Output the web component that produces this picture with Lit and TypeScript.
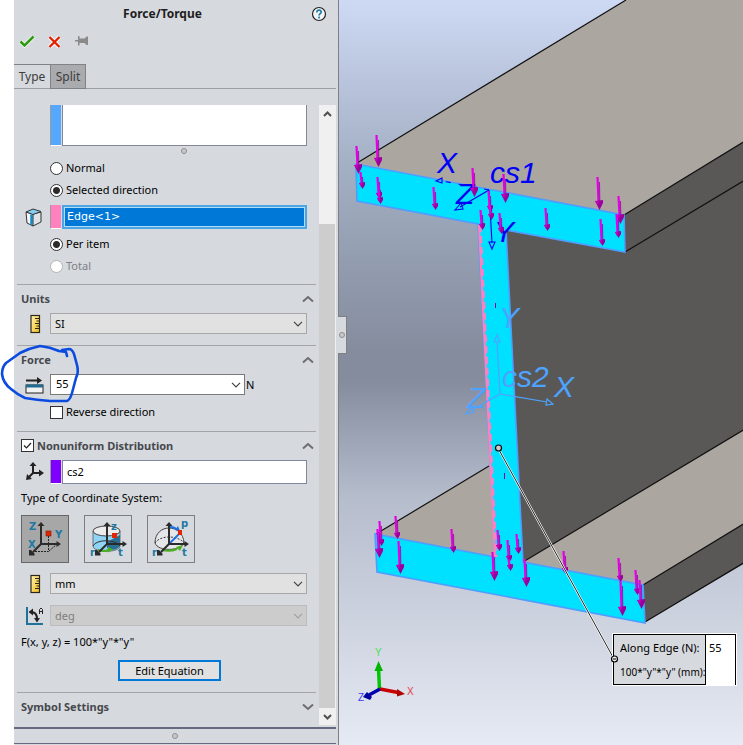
import { LitElement, html, svg, css } from "lit";
import { customElement, state } from "lit/decorators.js";

type Arrow = [x: number, top: number, tip: number];

const LOADS: Arrow[] = [
  [358, 147, 175], [378, 136, 168], [362, 173, 190], [379, 178, 200], [380, 186, 205],
  [435, 188, 211], [474, 169, 198], [505, 175, 204], [490, 192, 213], [491, 205, 221],
  [482, 211, 231], [501, 214, 235], [547, 209, 232], [599, 178, 211], [602, 220, 247],
  [620, 197, 225], [618, 215, 239],
  [381, 522, 547], [379, 530, 559], [397, 517, 540], [400, 542, 575], [453, 530, 554],
  [494, 553, 582], [499, 531, 552], [509, 541, 563], [510, 560, 572], [518, 535, 555],
  [526, 560, 588], [565, 552, 575], [620, 559, 583], [622, 582, 617], [637, 571, 596],
  [641, 581, 610],
];

const load = ([x, top, tip]: Arrow) => {
  const h = tip - top > 27 ? 9 : 6;
  const w = tip - top > 27 ? 4 : 3;
  return svg`
    <path d="M${x - 1.5} ${top}L${x - 0.5} ${tip - h}" stroke="#e400e4" stroke-width="2.2"/>
    <path d="M${x + 0.5} ${top + 5}L${x + 0.8} ${tip - h}" stroke="#8c0090" stroke-width=".8"/>
    <path d="M${x - w} ${tip - h}L${x + w} ${tip - h - 1}L${x + w} ${tip - h + 2}L${x + 0.5} ${tip}Z" fill="#9c009c"/>
    <path d="M${x - w} ${tip - h}h${w}l-1 4z" fill="#c400c4"/>`;
};

const chevron = (up: boolean) => html`<svg class="chev" viewBox="0 0 12 8" aria-hidden="true">
  <path d=${up ? "M1 6.5L6 2L11 6.5" : "M1 1.5L6 6L11 1.5"} fill="none" stroke="#6b6e73" stroke-width="2"/></svg>`;

const caret = html`<svg class="caret" viewBox="0 0 10 6" aria-hidden="true">
  <path d="M1 .8L5 4.8L9 .8" fill="none" stroke="currentColor" stroke-width="1.2"/></svg>`;

const ruler = html`<svg class="icon" viewBox="0 0 20 20" aria-hidden="true">
  <defs><linearGradient id="rg" x2="1" y2="1"><stop offset="0" stop-color="#fff3b0"/><stop offset="1" stop-color="#f2bc1c"/></linearGradient></defs>
  <rect x="6" y="1.5" width="8.500" height="17" fill="url(#rg)" stroke="#2c2718" stroke-width="1.200"/>
  <path d="M10 4.500h4M11.500 7h3M10 9.500h4M11.500 12h3M10 14.500h4" stroke="#2c2718"/></svg>`;

const axesIcon = svg`<path d="M0 0V-19M0 0H17M0 0L-8 8" stroke="#2b2b2b" stroke-width="2" fill="none"/>
  <path d="M0 -22l-3.500 4h7zM20 0l-4.500 -3v6zM-12 11.500v-5.500l2 0 3.500 3.500v2z" fill="#2b2b2b"/>`;

@customElement("app-root")
export class AppRoot extends LitElement {
  @state() private direction = "selected";
  @state() private system = 0;

  static styles = css`
    :host {
      display: grid;
      grid-template-columns: minmax(339px, 36%) 1fr;
      min-height: 100vh;
      position: relative;
      background: #fff;
      color: #000;
      font: 11px/16px "Noto Sans", "Open Sans", sans-serif;
    }
    * { box-sizing: border-box; }
    button, input, select { font: inherit; color: inherit; margin: 0; padding: 0; border-radius: 0; }
    button { background: none; border: 0; display: flex; align-items: center; justify-content: center; }
    h1, h2, p { margin: 0; font-size: inherit; }
    svg { display: block; }
    .panel {
      margin-left: 14px;
      background: #d6d9de;
      border-right: 1px solid #808080;
      padding-right: 2px;
      display: flex;
      flex-direction: column;
      position: relative;
    }
    .title { display: flex; align-items: center; height: 28px; padding: 0 9px 0 0; }
    .title h1 { flex: 1; text-align: center; font-weight: 700; font-size: 12px; color: #1e1e1e; }
    .help { width: 16px; height: 16px; }
    .actions { display: flex; align-items: center; gap: 12px; height: 27px; padding-left: 5px; }
    .actions svg { width: 16px; height: 16px; }
    .tabs { display: flex; height: 25px; margin: 9px 0 16px; border-bottom: 1px solid #9c9ea1; }
    .tab { width: 36px; height: 24px; border-top: 1px solid #808284; font-size: 12px; color: #3c3c3c; }
    .tab.off { height: 25px; border: 1px solid #808284; background: #a9abae; }
    .body { flex: 1; display: flex; }
    .content { flex: 1; min-width: 0; padding: 0 3px; }
    .rail { flex: 0 0 17px; background: #f0f0f0; display: flex; flex-direction: column; }
    .rail button { height: 17px; width: 17px; }
    .rail svg { width: 9px; height: 6px; }
    .track { flex: 1; padding-top: 102px; display: flex; }
    .thumb { flex: 1; background: #cdcdcd; margin-right: 1px; }
    .section { border-top: 1px solid #a3a5a8; padding: 0 9px 11px 0; }
    .section.first { border: 0; padding-bottom: 7px; }
    .section.tall { padding-bottom: 8px; }
    .section.last { padding-bottom: 3px; }
    .head { display: flex; align-items: center; gap: 3px; height: 27px; padding-left: 4px; margin-right: -7px; }
    .head h2 { flex: 1; font-weight: 700; color: #46484d; }
    .head + .row { margin-top: 1px; }
    .chev { width: 12px; height: 8px; }
    .row { display: flex; align-items: center; padding-left: 33px; position: relative; }
    .row + .row { margin-top: 11px; }
    .lead { padding-left: 0; }
    .lead > .icon { flex: 0 0 20px; margin: 0 5px 0 8px; width: 20px; height: 20px; }
    .strip { flex: 0 0 11px; height: 24px; border-left: 1px solid #9a9a9a; border-bottom: 1px solid #fff; margin-right: 1px; }
    .blue { background: #56a8ff; }
    .pink { background: #ff82be; }
    .violet { background: #8000ff; }
    .list { flex: 1; height: 24px; background: #fff; border: 1px solid #82879b; }
    .first .top { height: 41px; border-top: 0; }
    .grip { display: flex; justify-content: center; height: 11px; padding: 2px 0 0 43px; }
    .dot { width: 6px; height: 6px; border-radius: 50%; border: 1px solid #8e8e90; background: #c9c9cb; }
    .focus { border: 2px solid #4ba6e4; padding: 1px; background: #b4dcf6; }
    .option { background: #0078d7; color: #fff; height: 18px; padding-left: 2px; font: 11px/18px "DejaVu Sans", sans-serif; }
    .textfield { padding: 0 4px 2px; }
    .choice { display: flex; align-items: center; gap: 3px; height: 22px; margin-left: 33px; }
    .choice.disabled { color: #7e8084; }
    .edge { margin: 4px 0; }
    .reverse { margin-top: 6px; }
    input[type="radio"], input[type="checkbox"] {
      appearance: none; width: 13px; height: 13px; flex: none; background: #fff; border: 1px solid #333;
    }
    input[type="radio"] { border-radius: 50%; }
    input[type="radio"]:checked { background: radial-gradient(circle, #2b2b2b 0 3px, #fff 4px); }
    input[type="radio"]:disabled { border-color: #b4b4b4; }
    .tick { position: relative; display: flex; }
    .tick svg { position: absolute; inset: 0; width: 13px; height: 13px; pointer-events: none; display: none; }
    .tick input:checked + svg { display: block; }
    .pick { flex: 1; position: relative; display: flex; min-width: 0; color: #444; }
    .pick select {
      appearance: none; flex: 1; min-width: 0; height: 21px; padding-left: 4px;
      border: 1px solid #a8a8a8; background: #e1e1e1; color: #000;
    }
    .pick select:disabled { background: #ccc; border-color: #bcbcbc; color: #7e7e7e; opacity: 1; }
    .pick .caret { position: absolute; right: 4px; top: 8px; width: 10px; height: 6px; pointer-events: none; }
    .pick.dim { color: #a0a0a0; }
    .combo { flex: 1; height: 21px; display: flex; background: #fff; border: 1px solid #7a7a7a; margin-right: 1px; }
    .combo input { flex: 1; min-width: 0; border: 0; background: none; padding: 0 5px 2px; outline: 0; }
    .combo button { width: 16px; color: #444; }
    .combo .caret { width: 10px; height: 6px; }
    .unit { flex: 0 0 61px; }
    .caption { height: 28px; line-height: 28px; padding-left: 4px; }
    .systems { display: flex; gap: 15px; padding-left: 4px; margin: 3px 0 10px; }
    .system { width: 48px; height: 48px; border: 1px solid #7c7e82; }
    .system.on { background: #a7a7a7; border-color: #666; }
    .system svg { width: 46px; height: 46px; }
    .formula { height: 22px; line-height: 22px; margin: 5px 0 7px; padding-left: 4px; }
    .center { display: flex; justify-content: center; padding-left: 15px; }
    .edit { width: 103px; height: 21px; border: 2px solid #0078d7; background: #e1e1e1; }
    .foot { height: 17px; border-top: 2px solid #666a80; border-bottom: 1px solid #666a80; margin: 2px 0 1px; display: flex; align-items: center; justify-content: center; }
    .handle {
      position: absolute; left: 100%; top: 316px; width: 9px; height: 38px; background: #d6d9de;
      border: 1px solid #808080; border-left: 0; display: flex; align-items: center; justify-content: center; z-index: 1;
    }
    .view { position: relative; overflow: hidden; background: linear-gradient(#ced9f4 0%, #a2aec2 23%, #858c9e 47%, #858c9e 51%, #b6bdcd 67%, #cdd2df 83%, #e6eaf4 100%); }
    .scene { position: absolute; inset: 0; width: 100%; height: 100%; }
    .over { pointer-events: none; }
    .axis { font: italic 30px "Liberation Sans", sans-serif; }
    .glyph { font: bold 10px "DejaVu Sans", sans-serif; fill: #1e78a2; }
    .tag { font: 10px "Liberation Sans", sans-serif; }
    .callout {
      position: absolute; left: 274px; top: 634px; width: 123px; height: 51px; display: grid; grid-template-columns: minmax(0, 1fr) 29px;
      border: 1px solid #000; outline: 1px solid #fff; background: #d6d9de;
    }
    .callout .names { display: flex; flex-direction: column; padding-left: 6px; border-right: 1px solid #000; white-space: nowrap; }
    .callout label, .callout span { height: 25px; line-height: 25px; }
    .callout span { font-size: 10px; }
    .callout .value { background: #fff; }
    .callout input { width: 100%; height: 25px; border: 0; padding: 0 3px; background: none; }
    .ink { position: absolute; left: 0; top: 340px; width: 84px; height: 66px; pointer-events: none; z-index: 2; }
  `;

  private systems = [
    svg`<path d="M27.500 21V36.500H12M28 36L35 30" fill="none" stroke="#222" stroke-dasharray="2 1"/>
      <g transform="translate(20 29)">${axesIcon}</g>
      <rect x="25" y="16" width="5" height="5" fill="#e22400" stroke="#7c1a06" stroke-width=".6"/>
      <text class="glyph" x="8" y="15">Z</text><text class="glyph" x="34" y="23">Y</text><text class="glyph" x="7" y="33">X</text>`,
    svg`<path d="M9 16V31C9 38 36 38 36 31V16" fill="#8fd4f5" stroke="#555" stroke-width=".8"/>
      <path d="M23 27L36 20V31C33 35 28 36 23 33Z" fill="#2a6e93"/>
      <path d="M9 31C12 24 32 24 36 31" fill="none" stroke="#333"/>
      <ellipse cx="22.500" cy="16" rx="13.500" ry="5" fill="#ececec" stroke="#444"/>
      <path d="M14 35Q19 37 25 35" fill="none" stroke="#4caf20" stroke-width="2"/><path d="M29 34.500l-5-3v6z" fill="#4caf20"/>
      <g transform="translate(23 29)">${axesIcon}</g>
      <rect x="28" y="18" width="5" height="5" fill="#e22400"/>
      <text class="glyph" x="27" y="15">z</text><text class="glyph" x="6" y="41">r</text><text class="glyph" x="34" y="41">t</text>`,
    svg`<path d="M8 28C8 8 36 8 37 28C34 36 11 37 8 28Z" fill="#e4e6e9" stroke="#444"/>
      <path d="M8 28C13 20 31 20 37 28" fill="none" stroke="#333" stroke-dasharray="2 1.500"/>
      <path d="M15 35Q23 37 30 34" fill="none" stroke="#4caf20" stroke-width="2"/><path d="M36 30l-3 6-4-4z" fill="#4caf20"/>
      <path d="M23 28L33 18M23 12Q28 12 30 15" fill="none" stroke="#1f6fe0" stroke-width="1.800"/><path d="M33 16l-5-1 3-4z" fill="#1f6fe0"/>
      <g transform="translate(22 29)">${axesIcon}</g>
      <rect x="31" y="15" width="4" height="5" fill="#e22400"/>
      <text class="glyph" x="34" y="12">p</text><text class="glyph" x="5" y="41">r</text><text class="glyph" x="35" y="41">t</text>`,
  ];

  private head(title: string, up = true) {
    return html`<header class="head"><h2>${title}</h2><button aria-label="Toggle ${title}">${chevron(up)}</button></header>`;
  }

  private radio(group: string, value: string, label: string, checked: boolean, disabled = false) {
    return html`<label class="choice ${disabled ? "disabled" : ""}">
      <input type="radio" name=${group} .checked=${checked} ?disabled=${disabled}
        @change=${() => group === "direction" && (this.direction = value)}>${label}</label>`;
  }

  private pick(name: string, value: string, disabled = false) {
    return html`<div class="pick ${disabled ? "dim" : ""}">
      <select aria-label=${name} ?disabled=${disabled}><option>${value}</option></select>${caret}</div>`;
  }

  private panel() {
    return html`<aside class="panel">
      <div class="title"><h1>Force/Torque</h1>
        <button aria-label="Help"><svg class="help" viewBox="0 0 16 16">
          <circle cx="8" cy="8" r="6.500" fill="#f2f3f5" stroke="#222" stroke-width="1.200"/>
          <path d="M5.800 6.400C5.800 3.200 10.400 3.500 10.200 6.200C10 7.700 8.100 7.700 8.100 9.500" fill="none" stroke="#1d7ba8" stroke-width="1.700"/>
          <rect x="7.200" y="10.600" width="1.800" height="1.800" fill="#1d7ba8"/></svg></button>
      </div>
      <div class="actions">
        <button aria-label="OK"><svg viewBox="0 0 16 16"><path d="M1.500 7.500L5.500 11.500L14.500 2.500" fill="none" stroke="#fff" stroke-width="4"/><path d="M1.500 7.500L5.500 11.500L14.500 2.500" fill="none" stroke="#2f9a12" stroke-width="2.600"/></svg></button>
        <button aria-label="Cancel"><svg viewBox="0 0 16 16"><path d="M2.500 3L12.500 13M12.500 3L2.500 13" stroke="#fff" stroke-width="4"/><path d="M2.500 3L12.500 13M12.500 3L2.500 13" stroke="#e02200" stroke-width="2.400"/></svg></button>
        <button aria-label="Keep visible"><svg viewBox="2 1 16 16"><path d="M0 7H6V8.500H0ZM5 3H6.500V5.500H11.500L13.500 3.500H15V12H13.500L11.500 10H6.500V12.500H5Z" fill="#8a8a8a"/></svg></button>
      </div>
      <div class="tabs" role="tablist">
        <button class="tab" role="tab" aria-selected="true">Type</button>
        <button class="tab off" role="tab" aria-selected="false">Split</button>
      </div>
      <div class="body">
        <div class="content">
          <div class="section first">
            <div class="row"><span class="strip blue top"></span><div class="list top" role="listbox" aria-label="Faces"></div></div>
            <div class="grip"><span class="dot"></span></div>
            ${this.radio("direction", "normal", "Normal", this.direction === "normal")}
            ${this.radio("direction", "selected", "Selected direction", this.direction === "selected")}
            <div class="row lead edge">
              <svg class="icon" viewBox="1 0 20 20" aria-hidden="true">
                <path d="M2 5L9 7V19L3 16Z" fill="#f4f5f6" stroke="#333"/><path d="M9 7L17 5V15L9 19Z" fill="#dfe2e6" stroke="#333"/>
                <path d="M2 5L9 2L17 4.500L9 7.500Z" fill="#86cdf0" stroke="#333"/><path d="M7.500 7.500V18" stroke="#1489c8" stroke-width="2.500"/></svg>
              <span class="strip pink"></span>
              <div class="list focus" role="listbox" aria-label="Direction"><div class="option" role="option" aria-selected="true">Edge&lt;1&gt;</div></div>
            </div>
            ${this.radio("scope", "item", "Per item", true)}
            ${this.radio("scope", "total", "Total", false, true)}
          </div>
          <div class="section">
            ${this.head("Units")}
            <div class="row lead">${ruler}${this.pick("Units", "SI")}</div>
          </div>
          <div class="section tall">
            ${this.head("Force")}
            <div class="row lead">
              <svg class="icon" viewBox="1 0 20 20" aria-hidden="true"><path d="M2 5.500H14" stroke="#222" stroke-width="2"/><path d="M13 2L18 5.500L13 9Z" fill="#222"/>
                <rect x="2" y="10" width="17" height="8" fill="#f2f2f2" stroke="#222"/><path d="M2 11H19" stroke="#1f6b92" stroke-width="3"/></svg>
              <div class="combo"><input aria-label="Force value" value="55"><button aria-label="Values">${caret}</button></div>
              <span class="unit">N</span>
            </div>
            <label class="choice reverse"><input type="checkbox">Reverse direction</label>
          </div>
          <div class="section">
            <header class="head">
              <span class="tick"><input type="checkbox" id="nonuniform" checked><svg viewBox="0 0 13 13" aria-hidden="true"><path d="M3 6.500L5.500 9L10 4" fill="none" stroke="#222" stroke-width="1.200"/></svg></span>
              <h2><label for="nonuniform">Nonuniform Distribution</label></h2>
              <button aria-label="Toggle Nonuniform Distribution">${chevron(true)}</button>
            </header>
            <div class="row lead">
              <svg class="icon" viewBox="1 1 20 20" aria-hidden="true"><path d="M9 12V4M9 12H15M9 12L4 17" stroke="#222" stroke-width="2"/><path d="M9 1l-3.500 4h7zM20 12l-5-3.500v7zM2 19l1-6 5 5z" fill="#222"/></svg>
              <span class="strip violet"></span><input class="list textfield" aria-label="Coordinate system" value="cs2">
            </div>
            <p class="caption">Type of Coordinate System:</p>
            <div class="systems">
              ${this.systems.map((art, i) => html`<button class="system ${this.system === i ? "on" : ""}"
                aria-label=${["Cartesian", "Cylindrical", "Spherical"][i]} aria-pressed=${this.system === i}
                @click=${() => (this.system = i)}><svg viewBox="1 1 46 46">${art}</svg></button>`)}
            </div>
            <div class="row lead">${ruler}${this.pick("Length unit", "mm")}</div>
            <div class="row lead">
              <svg class="icon" viewBox="1 0 20 20" aria-hidden="true"><path d="M3 1V18H19" fill="none" stroke="#1f7398" stroke-width="2"/>
                <path d="M7 6Q13 6 13 13" fill="none" stroke="#222" stroke-width="2"/><path d="M9 2.500L4.500 6L9 9.500ZM10 12H16L13 16.500Z" fill="#222"/>
                <path d="M15.500 8V3.500L17 2L18.500 3.500V8M15.500 5.500H18.500" fill="none" stroke="#222"/></svg>
              ${this.pick("Angle unit", "deg", true)}
            </div>
            <p class="formula">F(x, y, z) = 100*"y"*"y"</p>
            <div class="center"><button class="edit">Edit Equation</button></div>
          </div>
          <div class="section last">${this.head("Symbol Settings", false)}</div>
        </div>
        <div class="rail">
          <button aria-label="Scroll up"><svg viewBox="0 0 9 6"><path d="M1 5L4.500 1.500L8 5" fill="none" stroke="#505050" stroke-width="2"/></svg></button>
          <div class="track"><div class="thumb"></div></div>
          <button aria-label="Scroll down"><svg viewBox="0 0 9 6"><path d="M1 1L4.500 4.500L8 1" fill="none" stroke="#505050" stroke-width="2"/></svg></button>
        </div>
      </div>
      <div class="foot"><span class="dot"></span></div>
      <div class="handle"><span class="dot"></span></div>
    </aside>`;
  }

  private view() {
    return html`<main class="view">
      <svg class="scene" viewBox="339 0 404 745" preserveAspectRatio="xMinYMin slice" role="img" aria-label="Beam with loads">
        <path d="M357 163L626 0H745V141L624 215Z" fill="#aca6a1"/>
        <path d="M624 215L745 141V430L523 562L506 230L625 252Z" fill="#5a5856"/>
        <path d="M376 534L489 466L496 557Z" fill="#aca6a1"/>
        <path d="M523 562L745 429V523L643 585Z" fill="#aca6a1"/>
        <path d="M643 585L745 523V563L645 622Z" fill="#5a5856"/>
        <path d="M357 163L626 0M624 215L745 141M625 252L745 180M376 534L489 466M523 562L745 429M643 585L745 523M645 622L745 562" fill="none" stroke="#111" stroke-width="1.200"/>
        <path d="M356 164L624 215L625 252L506 230L523 562L643 585L645 623L377 572L375 534L495 557L478 224L357 201Z" fill="#00e0ff" stroke="#4f9dff" stroke-width="1.600"/>
        <path d="M479 225L495 557" stroke="#ff80c0" stroke-width="2"/>
        <path d="M480 225L496 557" stroke="#ff80c0" stroke-width="3" stroke-dasharray="7 4"/>
        <g fill="none" stroke="#0000f0" stroke-width="1.100">
          <path d="M489 190L442 181" stroke-dasharray="5 8"/><path d="M442 178L436 181L442 183Z"/><path d="M489 190L460 207M461 203L455 210L463 209Z"/>
          <path d="M489 190L492 243M489 242H495L492 249Z"/>
        </g>
        <g class="axis" fill="#0000f5"><text x="437" y="173">X</text><text x="490" y="183">cs1</text><text x="456" y="204">Z</text><text x="494" y="242">Y</text></g>
        <g class="axis" fill="#4da3ff"><text x="499" y="328">Y</text><text x="502" y="387">cs2</text><text x="554" y="397">X</text><text x="467" y="408">Z</text></g>
        <g fill="none" stroke="#4da3ff" stroke-width="1.200"><path d="M500 394L497 342M494 342L497 335L500 342Z"/><path d="M500 394L547 402M547 399L553 404L546 405Z"/><path d="M500 394L472 410M470 408L466 414L474 412Z"/></g>
        <path d="M495.500 303V308M504.500 473V479" stroke="#9000a0"/>
        <g transform="translate(0 -1)">${LOADS.map(load)}</g>
        <path d="M498 448L614 659" stroke="#fff" stroke-width="2.200"/><path d="M498 448L614 659" stroke="#222"/>
        <circle cx="498.500" cy="448" r="3" fill="#ccc" stroke="#000" stroke-width="1.200"/>
        <path d="M379.500 689L378.500 668" stroke="#00c800" stroke-width="3.500"/><path d="M378.500 661L374.500 671H383Z" fill="#00b400"/>
        <path d="M380 689L398 692.500" stroke="#c80000" stroke-width="3.500"/><path d="M405 694L397 689V696.500Z" fill="#b00000"/>
        <path d="M380 689L369 695" stroke="#0000b0" stroke-width="3.500"/><path d="M363 697L367 692L372 697L370 700Z" fill="#0000a0"/>
        <g class="tag"><text x="375" y="656" fill="#4cdf4c">Y</text><text x="407" y="695" fill="#e63a3a">X</text><text x="358" y="701" fill="#3a3af0">Z</text></g>
      </svg>
      <div class="callout">
        <div class="names"><label for="along">Along Edge (N):</label><span>100*"y"*"y" (mm):</span></div>
        <div class="value"><input id="along" value="55"></div>
      </div>
      <svg class="scene over" viewBox="339 0 404 745" preserveAspectRatio="xMinYMin slice" aria-hidden="true">
        <circle cx="614.500" cy="659" r="3" fill="#eee" stroke="#000" stroke-width="1.200"/><path d="M613 659H616" stroke="#000"/></svg>
    </main>`;
  }

  render() {
    return html`${this.panel()}${this.view()}
      <svg class="ink" viewBox="0 340 84 66" aria-hidden="true">
        <path d="M67 356L66 352L59 351Q50 347 40 346Q30 348 20 353L6 363Q2 367 2 374Q3 383 11 389Q18 395 25 398Q37 400 50 401L67 401Q70 400 72 393L76 378Q79 372 77 365L74 354Q72 349 69 349L62 350" fill="none" stroke="#0b4be0" stroke-width="2.600" stroke-linecap="round" stroke-linejoin="round"/></svg>`;
  }
}
